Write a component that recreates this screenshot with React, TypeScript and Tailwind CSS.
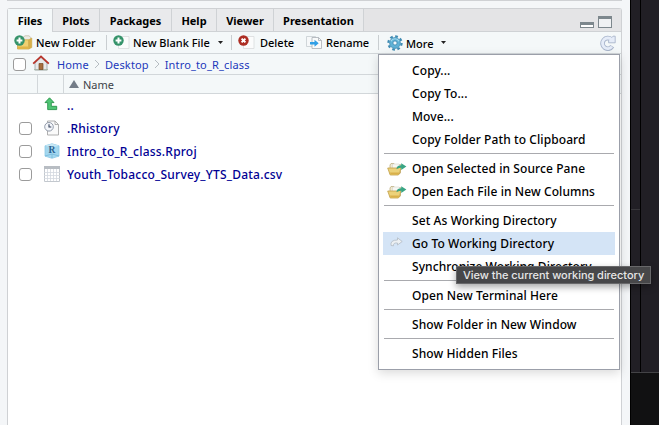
import React from "react";

type P = { children?: React.ReactNode; className?: string };

const tabs = [
  { name: "Files", box: "w-[45px] bg-[#f4f8f9]" },
  { name: "Plots", box: "w-[47px] bg-[#e9eaec] border-b border-b-[#cfd2d5]" },
  { name: "Packages", box: "w-[72px] bg-[#e9eaec] border-b border-b-[#cfd2d5]" },
  { name: "Help", box: "w-[45px] bg-[#e9eaec] border-b border-b-[#cfd2d5]" },
  { name: "Viewer", box: "w-[57px] bg-[#e9eaec] border-b border-b-[#cfd2d5]" },
  { name: "Presentation", box: "w-[90px] bg-[#e9eaec] border-b border-b-[#cfd2d5]" },
];

function Svg({ w, h, children, className = "" }: P & { w: number; h: number }) {
  return <svg width={w} height={h} viewBox={`0 0 ${w} ${h}`} className={`block shrink-0 ${className}`} fill="none">{children}</svg>;
}

function Plus() {
  return <g><circle cx="5.5" cy="5.5" r="5.2" fill="#35936a" /><path d="M5.5 2.6v5.8M2.6 5.5h5.8" stroke="#fff" strokeWidth="2" /></g>;
}
function NewFolderIcon() {
  return (
    <Svg w={19} h={15}>
      <path d="M9 5V2.5L11 .8h4l1.8 1.7V12L15 13.5" fill="#ecebe5" stroke="#c2bda9" strokeWidth=".8" />
      <path d="M3.5 14V4.8h11.3V14z" fill="#efd071" stroke="#cda747" strokeWidth=".8" />
      <path d="M14.8 4.8L17.8 3v9.5l-3 1.5z" fill="#d9b04a" stroke="#cda747" strokeWidth=".6" />
      <path d="M4 11.5h10.5V14H4z" fill="#e0b548" />
      <Plus />
    </Svg>
  );
}
function Page({ del }: { del?: boolean }) {
  return (
    <Svg w={17} h={15}>
      <path d="M6.5 1.5H16v12H5.500V8z" fill="#fbfcfc" stroke="#d9dcdd" strokeWidth=".8" />
      {del ? <g><circle cx="5.5" cy="5.5" r="5.2" fill="#ad2e24" /><path d="M3.6 3.6l3.8 3.8M7.4 3.6l-3.8 3.8" stroke="#fff" strokeWidth="2" /></g> : <Plus />}
    </Svg>
  );
}
function RenameIcon() {
  return (
    <Svg w={16} h={14}>
      <path d="M.5.5h9v10h-9z" fill="#f6f8f9" stroke="#c7cdd1" strokeWidth=".8" />
      <path d="M6 1.5h6.5l3 3v8H6z" fill="#f9fafa" stroke="#a8afb5" strokeWidth=".8" />
      <path d="M12.5 1.5v3h3" stroke="#a8afb5" strokeWidth=".8" />
      <path d="M4 6h4.500V3.700l4.200 3.500-4.200 3.600V8.500H4z" fill="#2f9fe6" />
    </Svg>
  );
}
function Gear() {
  return (
    <Svg w={16} h={16}>
      <circle cx="8" cy="8" r="6.6" stroke="#3f8bb3" strokeWidth="2.2" strokeDasharray="2.7 2.48" />
      <circle cx="8" cy="8" r="5.4" fill="#5fb2d6" stroke="#4590b8" strokeWidth=".8" />
      <path d="M4 6.2a4.5 4.5 0 018 0" stroke="#a6dcf0" strokeWidth="1.2" />
      <circle cx="8" cy="8" r="2.1" fill="#f4fafc" stroke="#4186ad" strokeWidth=".8" />
    </Svg>
  );
}
function RefreshIcon() {
  return (
    <Svg w={16} h={16}>
      <path d="M11.4 4.5A5.3 5.3 0 1 0 12.300 11.300" stroke="#a9b5cb" strokeWidth="4.600" />
      <path d="M15.200 1.200V7.800H8.600V5.600L13 1.200z" fill="#e5ecf8" stroke="#a9b5cb" strokeWidth=".9" />
      <path d="M11.800 4.800A5.300 5.300 0 1 0 11.900 11.700" stroke="#e5ecf8" strokeWidth="2.800" />
    </Svg>
  );
}
function HomeIcon() {
  return (
    <Svg w={18} h={16}>
      <path d="M3 8L9 2.5 15 8v7H3z" fill="#e7e9ea" stroke="#9b9fa3" strokeWidth=".8" />
      <path d="M2 14.7h14" stroke="#a7b6a5" />
      <path d="M7 8.5h4v6H7z" fill="#a66d3d" stroke="#754926" strokeWidth=".7" />
      <path d="M1.2 8.700L9 1.400l7.800 7.300" stroke="#b8342a" strokeWidth="1.8" />
    </Svg>
  );
}
function UpIcon() {
  return <Svg w={14} h={14} className="mb-[2px]"><path d="M5.5.8L1 5.600h2.700v7h9V9.300H7.300V5.600H10z" fill="#4fc574" stroke="#279349" strokeWidth=".9" strokeLinejoin="round" /></Svg>;
}
function HistoryIcon() {
  return (
    <Svg w={16} h={16}>
      <path d="M3.5 1H11l3.500 3.500V15h-11z" fill="#fafafa" stroke="#a7a7a7" strokeWidth=".9" />
      <path d="M11 1v3.500h3.500" stroke="#a7a7a7" strokeWidth=".9" />
      <circle cx="5" cy="6.8" r="4.3" fill="#f4f6fa" stroke="#929baa" /><path d="M5 4.200V7h2.300" stroke="#34415b" strokeWidth="1.1" />
    </Svg>
  );
}
function ProjectIcon() {
  return (
    <Svg w={16} h={16}>
      <path d="M8 .8l7 2v10.300l-7 2.200-7-2.200V2.800z" fill="#a3d7ef" stroke="#8cc9e6" strokeWidth=".8" />
      <path d="M1 2.800L8 4.500l7-1.700L8 .8z" fill="#c6e7f5" /><path d="M8 11v4M1 13l7-2 7 2" stroke="#70b4d9" strokeWidth=".7" />
      <text x="4.500" y="10.200" fontSize="9.500" fontWeight="bold" fontFamily="Liberation Serif, serif" fill="#2b6290">R</text>
    </Svg>
  );
}
function TableIcon() {
  return (
    <Svg w={16} h={16}>
      <path d="M.5.5h15v15H.5z" fill="#fff" stroke="#c3c8ce" /><path d="M0 0h16v3H0z" fill="#b8bdc3" />
      <path d="M3.500 3v12M6.500 3v12M9.500 3v12M12.500 3v12M0 6.500h16M0 9.500h16M0 12.500h16" stroke="#d3d8df" strokeWidth=".8" />
    </Svg>
  );
}
function OpenIcon() {
  return (
    <Svg w={20} h={14}>
      <path d="M3 12V3l1-1.500h3l1 1h5.500V11z" fill="#efe9d3" stroke="#c0b080" strokeWidth=".8" />
      <path d="M5.500 2H12l1.500 1.500v5h-8z" fill="#f7f7f3" stroke="#cfccc0" strokeWidth=".5" />
      <path d="M.7 6H11l3-1-1.500 7-1.500 1H3.200z" fill="#ecd27a" stroke="#c39f48" strokeWidth=".8" />
      <path d="M3 10.500h9.300l-.7 2H3.600z" fill="#d9b04a" />
      <path d="M9.500 7.300q0-4 4.700-4V1.200l5.200 3.400-5.200 3.300V5.700q-3-.2-4.700 1.600z" fill="#39a583" />
    </Svg>
  );
}
function GoIcon() {
  return <Svg w={13} h={10} className="mb-[3px]"><path d="M1 8.500Q0 3 7.500 3V.8l4.700 3.700-4.700 3.500V6Q3 5.500 3.500 8.800z" fill="#edf0f3" stroke="#b3bbc4" strokeWidth=".8" /></Svg>;
}

function Check() {
  return <span className="block h-[13px] w-[13px] shrink-0 rounded-[3px] border border-[#9b9b9b] bg-white" />;
}
function Caret() {
  return <Svg w={5} h={3}><path d="M0 0h5L2.500 3z" fill="#222" /></Svg>;
}
function Tool({ icon, label, className = "" }: { icon: React.ReactNode; label: string; className?: string }) {
  return <div className={`flex shrink-0 items-center ${className}`}>{icon}<span>{label}</span></div>;
}
function Divider() {
  return <span className="h-[15px] w-px shrink-0 bg-[#c9ced1]" />;
}
function Chevron() {
  return <Svg w={6} h={10} className="mx-[5px]"><path d="M1 1l4 4-4 4" stroke="#b6bdc2" /></Svg>;
}
function FileRow({ icon, label, check = true }: { icon: React.ReactNode; label: string; check?: boolean }) {
  return (
    <div className="flex h-[23px] items-center font-medium text-[#000094]">
      <div className="w-[36px] pb-px pl-[11px]">{check && <Check />}</div>
      <div className="w-[23px] pb-[2px]">{icon}</div>
      <span className="tracking-[0.22px]">{label}</span>
    </div>
  );
}
function Item({ label, icon, active }: { label: string; icon?: React.ReactNode; active?: boolean }) {
  return (
    <div className={`mx-1 flex h-[23px] items-center ${active ? "bg-[#d4e4f6]" : ""}`}>
      <span className={`flex w-[29px] shrink-0 ${active ? "pl-[7px]" : "pl-1"}`}>{icon}</span>
      <span className="font-medium tracking-[0.09px]">{label}</span>
    </div>
  );
}
function Sep() {
  return <div className="mx-[5px] h-[6px] pt-[2px]"><div className="h-px bg-[#a9aaae]" /></div>;
}

export default function App() {
  return (
    <div className="relative flex h-[425px] w-[659px] overflow-hidden whitespace-nowrap bg-[#f4f6f8] font-['Noto_Sans',sans-serif] text-[12px] leading-none text-black">
      <div className="flex w-[630px] shrink-0 flex-col pl-[7px]">
        <div className="h-px w-[615px] bg-[#cfd1d4]" />
        <main className="mt-[7px] flex w-[615px] grow flex-col rounded-t-[3px] border-x border-t border-[#cfd1d4] bg-white">
          <nav className="flex h-[23px] shrink-0 bg-[#e4e4e6] text-[11px] font-bold">
            {tabs.map((t) => <div key={t.name} className={`flex shrink-0 items-center justify-center border-r border-r-[#cfd2d5] ${t.box}`}>{t.name}</div>)}
            <div className="flex grow items-end gap-1 border-b border-[#cfd2d5] pb-[3px] pl-[216px]">
              <span className="h-[6px] w-[14px] border border-t-[3px] border-[#7d878d] bg-white" />
              <span className="h-[12px] w-[14px] border border-t-[3px] border-[#7d878d] bg-[#f0f1f3]" />
            </div>
          </nav>
          <div className="flex h-[22px] shrink-0 items-center border-b border-[#d2d7da] bg-[#f4f8f9] text-[11px] font-medium">
            <Tool className="w-[98px] gap-[3px] pl-[6px]" icon={<NewFolderIcon />} label="New Folder" />
            <Divider />
            <Tool className="w-[111px] gap-[3px] pl-[6px]" icon={<Page />} label="New Blank File" />
            <Caret />
            <span className="w-[8px]" />
            <Divider />
            <Tool className="w-[68px] gap-[5px] pl-[6px]" icon={<Page del />} label="Delete" />
            <Tool className="w-[78px] gap-[4px] pl-[6px]" icon={<RenameIcon />} label="Rename" />
            <Divider />
            <Tool className="ml-[8px] w-[54px] gap-[3px] pt-px" icon={<Gear />} label="More" />
            <Caret />
            <div className="ml-auto pr-[5px]"><RefreshIcon /></div>
          </div>
          <div className="flex h-[21px] shrink-0 items-center border-b border-[#d2d7da] bg-[#f4f8f9] pl-[5px] text-[11px] tracking-[0.15px] text-[#1c39bb]">
            <Check /><span className="ml-[6px] mr-[7px] pb-[2px]"><HomeIcon /></span><span>Home</span><Chevron /><span>Desktop</span><Chevron /><span>Intro_to_R_class</span>
          </div>
          <div className="flex h-[19px] shrink-0 items-center border-b border-[#d2d7da] bg-[#f4f8f9] text-[11px] text-[#3d4348]">
            <div className="h-full w-[30px] border-r border-[#d2d7da]" /><div className="h-full w-[26px] border-r border-[#d2d7da]" />
            <span className="mb-px ml-[5px] mr-[4px] h-0 w-0 border-x-[5px] border-b-[8px] border-x-transparent border-b-[#747d88]" /><span>Name</span>
          </div>
          <FileRow icon={<UpIcon />} label=".." check={false} />
          <FileRow icon={<HistoryIcon />} label=".Rhistory" />
          <FileRow icon={<ProjectIcon />} label="Intro_to_R_class.Rproj" />
          <FileRow icon={<TableIcon />} label="Youth_Tobacco_Survey_YTS_Data.csv" />
        </main>
      </div>
      <aside className="w-[29px] border-l border-black bg-[#111112]">
        <div className="flex h-[373px] border-b border-[#434346] bg-[#211f25]">
          <div className="w-[10px] border-r border-black pt-[209px]"><div className="h-px bg-[#38373b]" /></div>
        </div>
      </aside>
      <div className="absolute left-[378px] top-[54px] h-[316px] w-[242px] border border-[#9b9fa9] bg-white py-1 shadow-[0_3px_10px_rgba(0,0,0,0.15)]">
        <Item label="Copy..." /><Item label="Copy To..." /><Item label="Move..." /><Item label="Copy Folder Path to Clipboard" /><Sep />
        <Item icon={<OpenIcon />} label="Open Selected in Source Pane" /><Item icon={<OpenIcon />} label="Open Each File in New Columns" /><Sep />
        <Item label="Set As Working Directory" /><Item icon={<GoIcon />} label="Go To Working Directory" active /><Item label="Synchronize Working Directory" /><Sep />
        <Item label="Open New Terminal Here" /><Sep /><Item label="Show Folder in New Window" /><Sep /><Item label="Show Hidden Files" />
      </div>
      <div className="absolute left-[456px] top-[266px] flex h-[18px] w-[195px] items-center border border-[#68686a] bg-[#474749] pl-[6px] font-['Inter',sans-serif] text-[11px] font-medium tracking-[-0.04px] text-[#e6e6e6] shadow-[0_3px_7px_rgba(0,0,0,0.35)]">View the current working directory</div>
    </div>
  );
}
